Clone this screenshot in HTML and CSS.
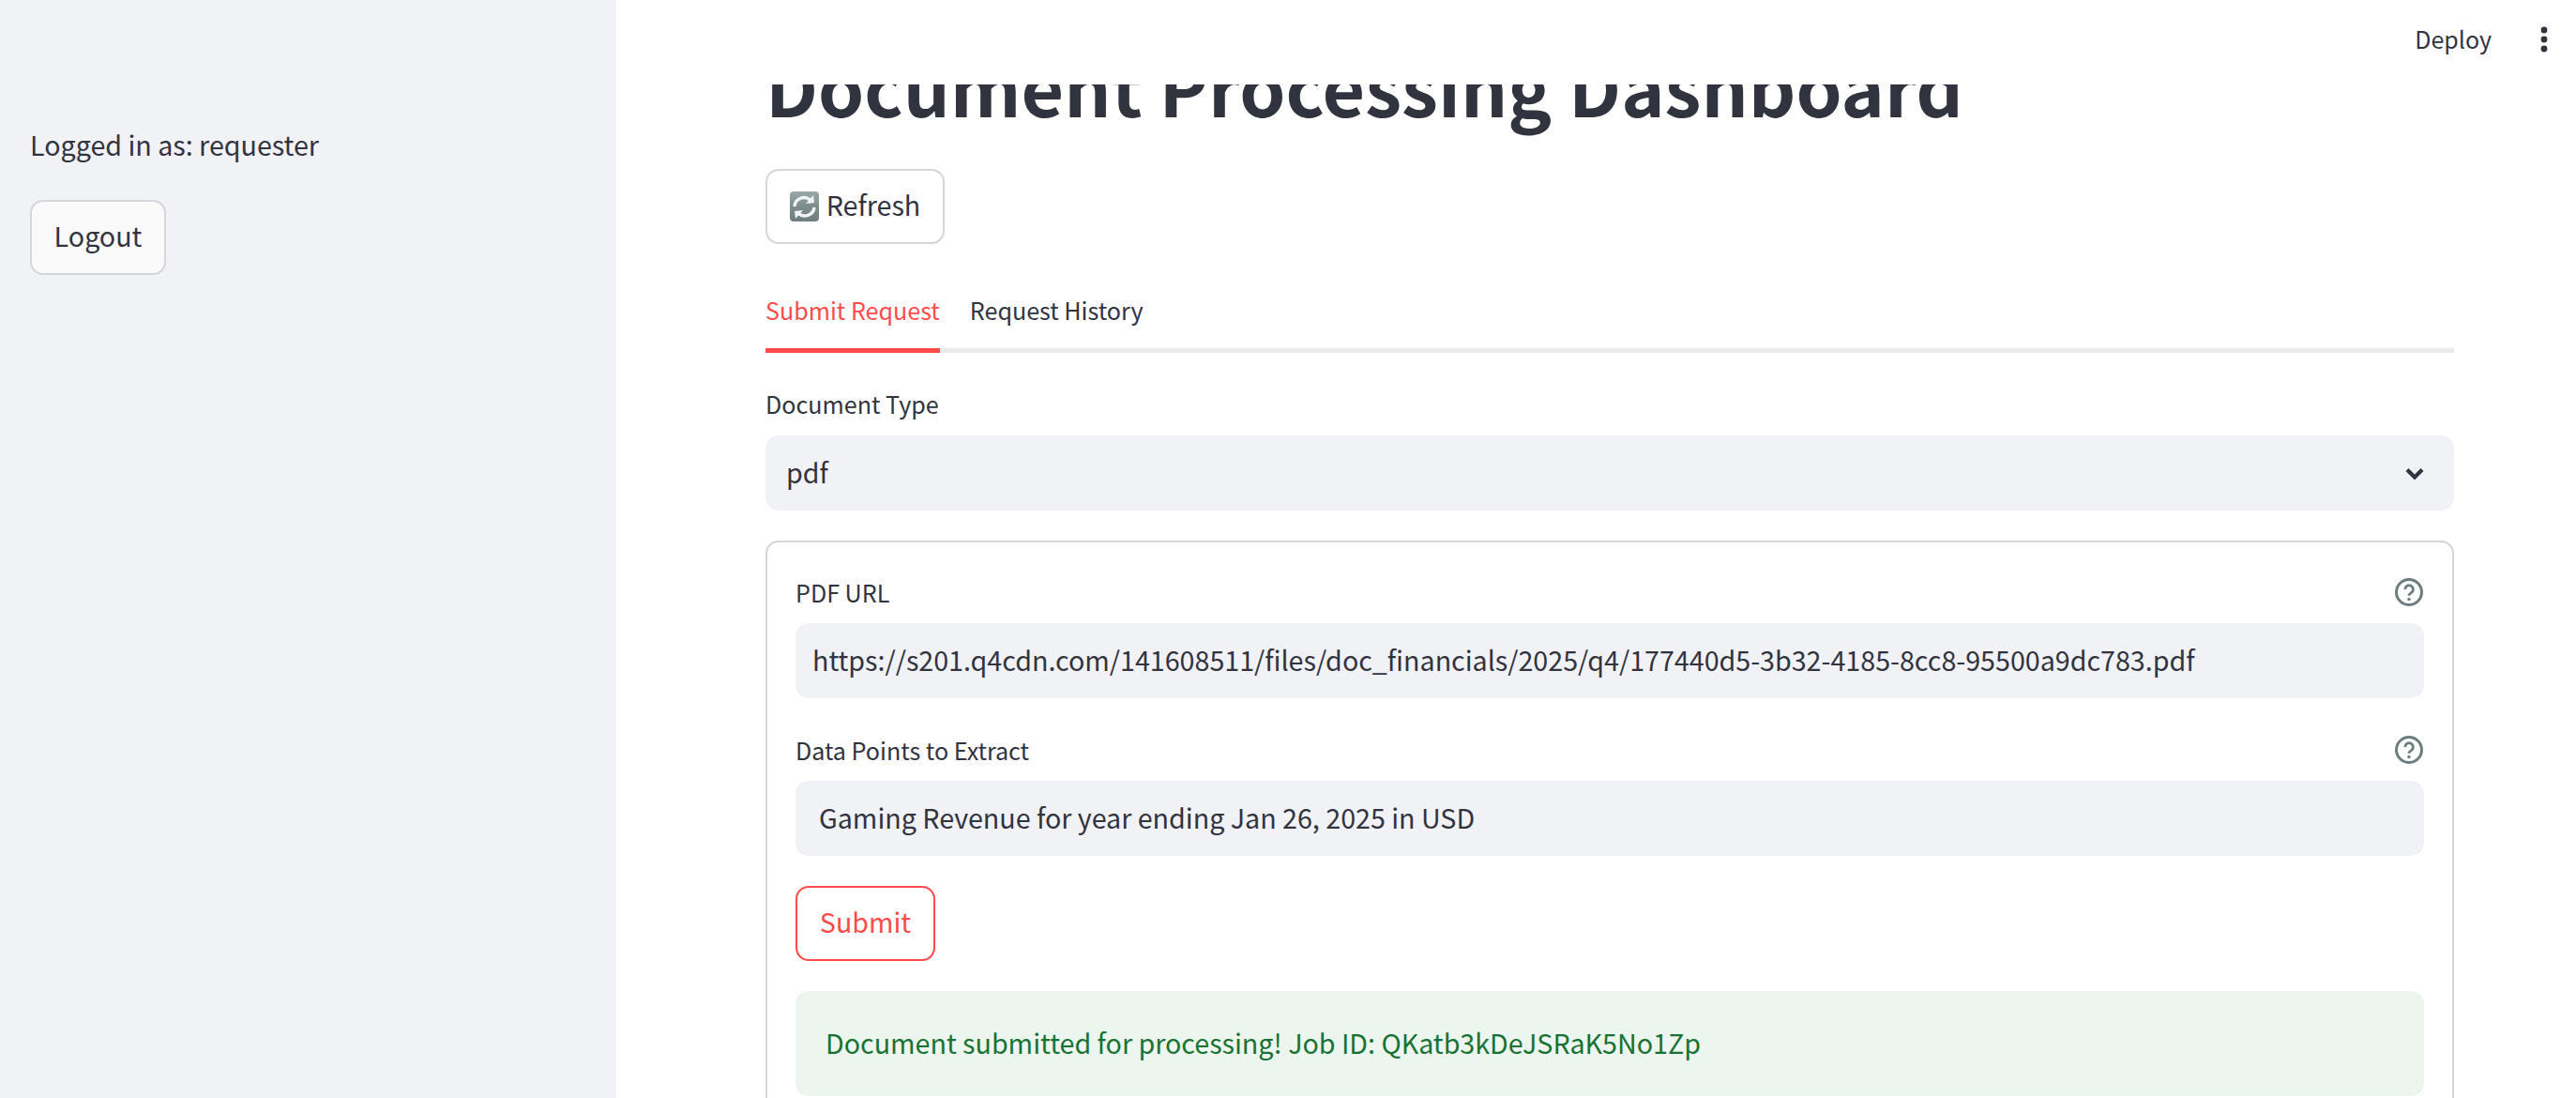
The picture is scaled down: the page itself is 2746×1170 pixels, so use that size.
FILE: index.html
```html
<!DOCTYPE html>
<html lang="en">
<head>
<meta charset="utf-8">
<title>Document Processing Dashboard</title>
<link rel="stylesheet" href="styles.css">
</head>
<body>
<div class="app">
  <aside class="sidebar">
    <p class="user">Logged in as: requester</p>
    <button class="btn btn-side">Logout</button>
  </aside>
  <main class="main">
    <header class="topbar">
      <span class="deploy">Deploy</span>
      <svg class="kebab" width="8" height="28" viewBox="0 0 8 28"><circle cx="4" cy="4" r="3.4"/><circle cx="4" cy="14" r="3.4"/><circle cx="4" cy="24" r="3.4"/></svg>
    </header>
    <h1 class="title">Document Processing Dashboard</h1>
    <button class="btn btn-refresh">
      <svg class="emoji" width="31" height="32" viewBox="0 0 31 32">
        <defs><linearGradient id="g" x1="0" y1="0" x2="0" y2="1"><stop offset="0" stop-color="#9aa8a8"/><stop offset=".5" stop-color="#7d8d8d"/><stop offset="1" stop-color="#6f7f7f"/></linearGradient></defs>
        <rect width="31" height="32" rx="4" fill="url(#g)"/>
        <path d="M5 16a10 10 0 0 1 17-6.500" fill="none" stroke="#f2f4f4" stroke-width="3.400"/>
        <path d="M26 17a10 10 0 0 1-17 6" fill="none" stroke="#f2f4f4" stroke-width="3.400"/>
        <path d="M17 13l9-1-1-8zM14 20l-9 1 1 8z" fill="#f2f4f4"/>
      </svg>
      <span>Refresh</span>
    </button>
    <nav class="tabs">
      <span class="tab tab-active">Submit Request</span>
      <span class="tab">Request History</span>
    </nav>
    <label class="label label-type">Document Type</label>
    <div class="field select">
      <span>pdf</span>
      <svg class="chevron" width="20" height="13" viewBox="0 0 20 13"><path d="M2 2.500l8 8 8-8" fill="none" stroke="#31333f" stroke-width="4.200"/></svg>
    </div>
    <section class="card">
      <div class="label-row">
        <label class="label">PDF URL</label>
        <svg class="help" width="30" height="30" viewBox="0 0 30 30"><circle cx="15" cy="15" r="13.500" fill="none" stroke-width="3"/><path d="M10.800 12a4.300 4.300 0 1 1 6.600 3.600c-1.500 1-2.400 1.600-2.400 3.200" fill="none" stroke-width="2.800"/><circle class="dot" cx="15" cy="22.500" r="1.700"/></svg>
      </div>
      <div class="field field-url"><span class="field-text">https://s201.q4cdn.com/141608511/files/doc_financials/2025/q4/177440d5-3b32-4185-8cc8-95500a9dc783.pdf</span></div>
      <div class="label-row label-row-second">
        <label class="label">Data Points to Extract</label>
        <svg class="help" width="30" height="30" viewBox="0 0 30 30"><circle cx="15" cy="15" r="13.500" fill="none" stroke-width="3"/><path d="M10.800 12a4.300 4.300 0 1 1 6.600 3.600c-1.500 1-2.400 1.600-2.400 3.200" fill="none" stroke-width="2.800"/><circle class="dot" cx="15" cy="22.500" r="1.700"/></svg>
      </div>
      <div class="field field-data"><span class="field-text">Gaming Revenue for year ending Jan 26, 2025 in USD</span></div>
      <button class="btn btn-submit">Submit</button>
      <div class="alert"><span class="field-text">Document submitted for processing! Job ID: QKatb3kDeJSRaK5No1Zp</span></div>
    </section>
  </main>
</div>
</body>
</html>
```
FILE: styles.css
```css
* { box-sizing: border-box; }
html, body { margin: 0; height: 100%; overflow: hidden; background: #fff; }
body {
  font-family: "Noto Sans CJK SC", "Source Sans Pro", "Noto Sans", sans-serif;
  font-size: 28.65px;
  color: #31333f;
}
.app { display: flex; height: 1170px; overflow: hidden; }
.sidebar {
  flex: 0 0 657px;
  background: #f0f2f6;
  padding: 131px 32px 0;
}
.user { margin: 0 0 37px; line-height: 45px; }
.btn {
  display: flex;
  align-items: center;
  justify-content: center;
  height: 80px;
  padding: 0 0 5px;
  font: inherit;
  color: inherit;
  background: #fff;
  border: 2px solid #d5d6d9;
  border-radius: 14px;
}
.btn-side { width: 145px; background: #fafafb; }
.main {
  position: relative;
  flex: 1;
  min-width: 0;
  padding: 0 130px 0 159px;
  overflow: hidden;
}
.topbar {
  position: absolute;
  top: 0; left: 0; right: 0;
  height: 90px;
  background: #fff;
  z-index: 2;
  display: flex;
  justify-content: flex-end;
  padding: 28px 30px 0 0;
  font-size: 25px;
}
.deploy { line-height: 26px; margin-right: 52px; }
.kebab { fill: #31333f; }
.title {
  margin: 0;
  padding-top: 46px;
  height: 180px;
  font-size: 78.6px;
  line-height: 90px;
  font-weight: 700;
  white-space: nowrap;
}
.btn-refresh { width: 191px; gap: 8px; }
.emoji { flex: none; margin-top: 5px; }
.tabs {
  display: flex;
  gap: 32px;
  margin-top: 39px;
  height: 77px;
  border-bottom: 5px solid #eaeaeb;
  font-size: 25.1px;
}
.tab { height: 77px; padding-top: 16px; line-height: 30px; }
.tab-active { color: #ff4b4b; border-bottom: 5px solid #ff4b4b; }
.label { display: block; font-size: 25.1px; line-height: 30px; }
.label-type { margin-top: 39px; margin-bottom: 19px; }
.field {
  display: flex;
  align-items: center;
  height: 80px;
  background: #f0f2f6;
  border-radius: 14px;
  white-space: nowrap;
}
.field-text { margin-bottom: 4px; }
.select { justify-content: space-between; padding: 0 32px 4px 22px; }
.chevron { margin-top: 4px; }
.card {
  margin-top: 32px;
  height: 700px;
  padding: 0 30px;
  border: 2px solid #d5d6d9;
  border-radius: 14px;
}
.label-row {
  display: flex;
  justify-content: space-between;
  align-items: center;
  height: 30px;
  margin-top: 38px;
  margin-bottom: 18px;
}
.label-row-second { margin-top: 40px; margin-bottom: 18px; }
.help { stroke: #6d7d7d; flex: none; margin-right: 1px; }
.help .dot { fill: #6d7d7d; stroke: none; }
.field-url { padding-left: 18px; }
.field-data { padding-left: 25px; }
.btn-submit {
  width: 149px;
  margin-top: 32px;
  color: #ff4b4b;
  border-color: #ff4b4b;
}
.alert {
  display: flex;
  align-items: center;
  height: 112px;
  margin-top: 32px;
  padding: 0 32px;
  background: #ecf5ee;
  color: #177233;
  border-radius: 14px;
}
```
